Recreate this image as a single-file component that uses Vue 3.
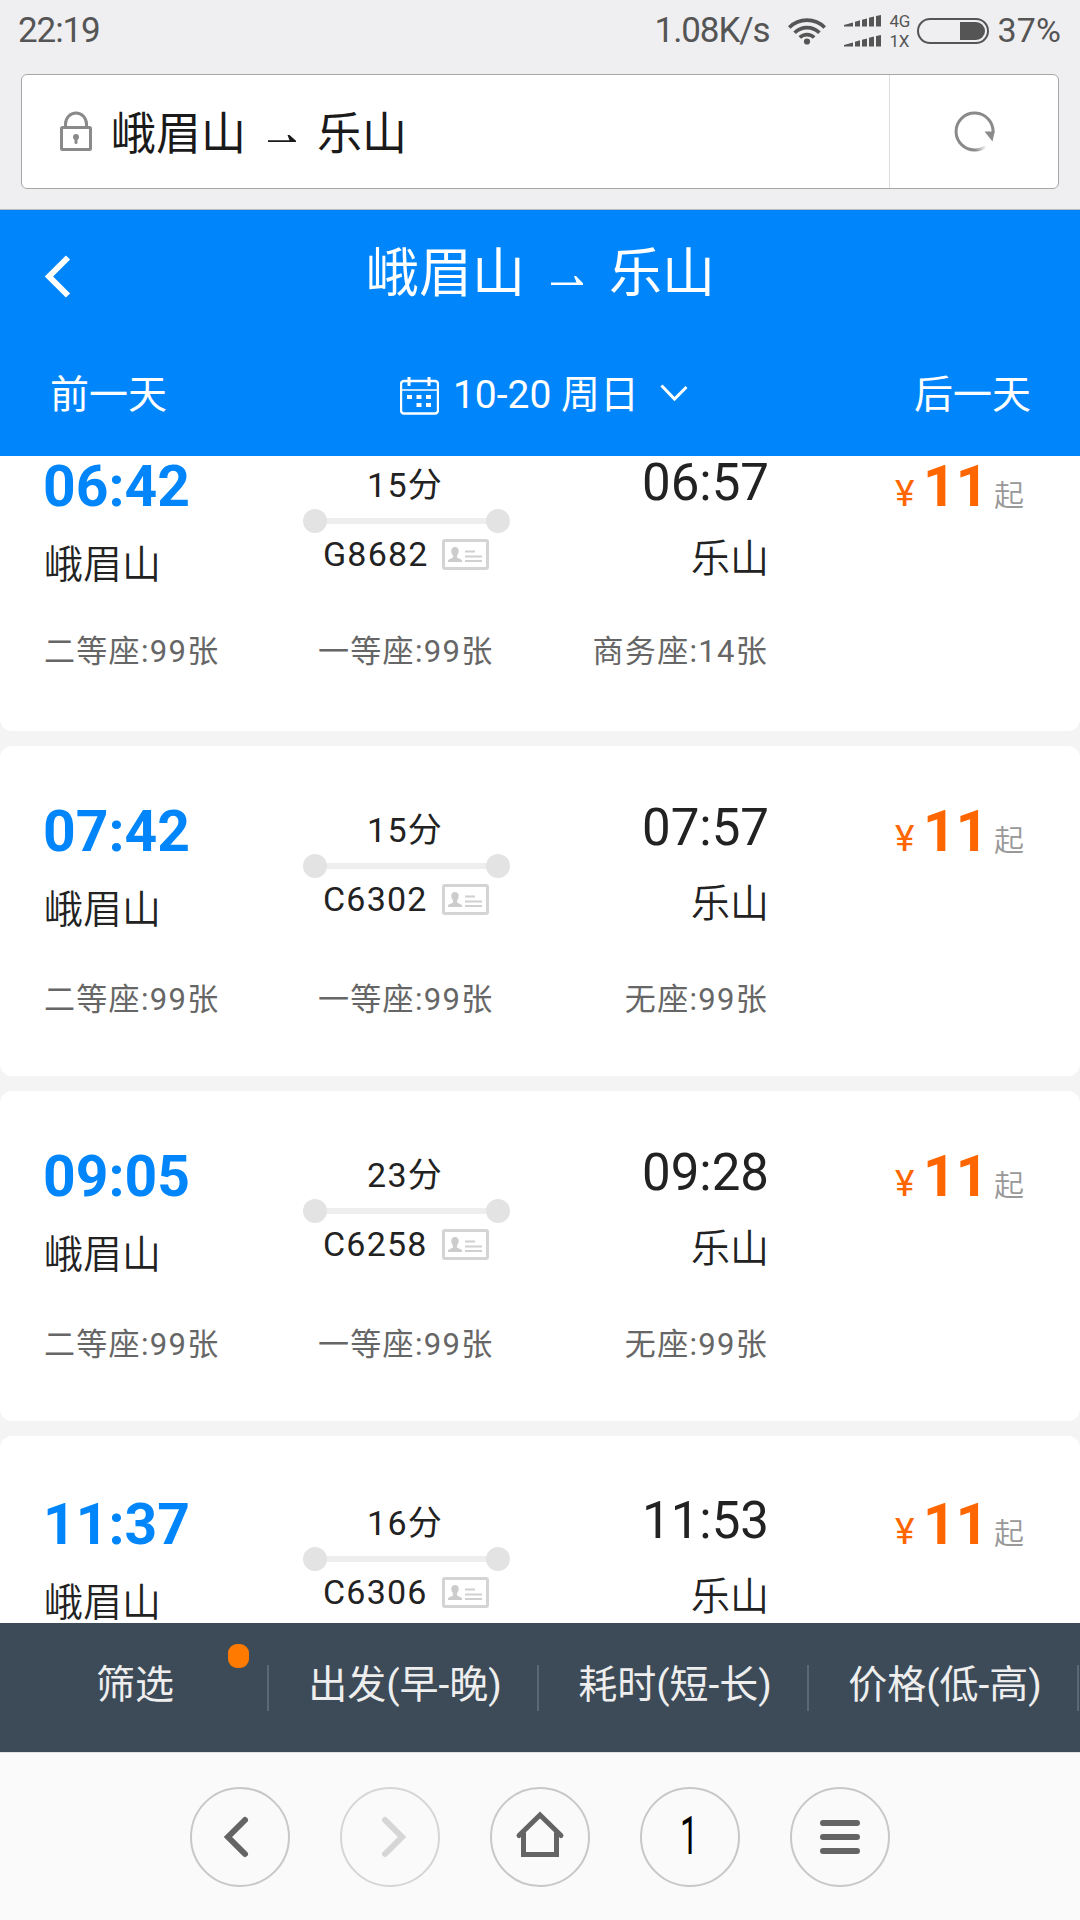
<script setup>
import { ref } from 'vue';

const from = ref('峨眉山');
const to = ref('乐山');

const trains = ref([
  { depart: '06:42', arrive: '06:57', duration: '15分', number: 'G8682', seats: ['二等座:99张', '一等座:99张', '商务座:14张'] },
  { depart: '07:42', arrive: '07:57', duration: '15分', number: 'C6302', seats: ['二等座:99张', '一等座:99张', '无座:99张'] },
  { depart: '09:05', arrive: '09:28', duration: '23分', number: 'C6258', seats: ['二等座:99张', '一等座:99张', '无座:99张'] },
  { depart: '11:37', arrive: '11:53', duration: '16分', number: 'C6306', seats: [] }
]);

const filters = ref([
  { title: '筛选', badge: true },
  { title: '出发(早-晚)' },
  { title: '耗时(短-长)' },
  { title: '价格(低-高)' }
]);
</script>

<template>
  <div class="page">
    <header class="browser">
      <div class="status">
        <span class="status__time">22:19</span>
        <span class="status__speed">1.08K/s</span>
        <svg class="status__wifi" width="38" height="28" viewBox="0 0 38 28">
          <g fill="none" stroke="#555" stroke-width="3.6">
            <path d="M1.3 10.5a25 25 0 0 1 35.4 0" />
            <path d="M6.6 15.8a17.5 17.5 0 0 1 24.8 0" />
            <path d="M11.8 20.6a10.2 10.2 0 0 1 14.4 0" />
          </g>
          <circle cx="19" cy="24.5" r="3.1" fill="#555" />
        </svg>
        <span class="status__signal">
          <svg v-for="n in 2" :key="n" width="37" height="12" viewBox="0 0 37 12" fill="#555">
            <path d="M0 11.5V10l9-2.6v4.1zM11 11.5V6.8l5-1.5v6.2zM18 11.5V4.7l5-1.3v8.1zM25 11.5V2.8l5-1.2v9.9zM32 11.5V1l5-1v11.5z" />
          </svg>
        </span>
        <span class="status__net"><i>4G</i><i>1X</i></span>
        <span class="status__battery"><b></b></span>
        <span class="status__percent">37%</span>
      </div>
      <div class="address">
        <svg class="address__lock" width="32" height="40" viewBox="0 0 32 40">
          <path d="M5.5 16v-3a10.5 11 0 0 1 21 0v3" fill="none" stroke="#8a8a8a" stroke-width="3" />
          <rect x="1.5" y="16.5" width="29" height="22" rx="1" fill="none" stroke="#8a8a8a" stroke-width="3" />
          <circle cx="16" cy="26" r="3" fill="#8a8a8a" />
          <path d="M16 26v5.5" stroke="#8a8a8a" stroke-width="3" stroke-linecap="round" />
        </svg>
        <div class="address__title">
          <span>{{ from }}</span>
          <svg class="address__arrow" width="28" height="8" viewBox="0 0 28 8">
            <path d="M0 5.2h21.5L19.5 0h2l6.5 5.8v1.2H0z" fill="#1a1a1a" />
          </svg>
          <span>{{ to }}</span>
        </div>
        <div class="address__reload">
          <svg width="41" height="41" viewBox="0 0 41 41">
            <defs>
              <linearGradient id="fade" gradientUnits="userSpaceOnUse" x1="21" y1="38" x2="32" y2="35">
                <stop offset="0" stop-color="#8a8a8a" />
                <stop offset="1" stop-color="#8a8a8a" stop-opacity="0" />
              </linearGradient>
            </defs>
            <path d="M39 22A18.5 18.5 0 1 0 21 39" fill="none" stroke="#8a8a8a" stroke-width="3" />
            <path d="M21 39A18.5 18.5 0 0 0 32 35.3" fill="none" stroke="url(#fade)" stroke-width="3" />
            <path d="M30.5 20.5h10.2l-2.2 10z" fill="#8a8a8a" />
          </svg>
        </div>
      </div>
    </header>

    <section class="head">
      <div class="head__top">
        <svg class="head__back" width="26" height="43" viewBox="0 0 26 43">
          <path d="M23 2.5L4 21.5l19 19" fill="none" stroke="#fff" stroke-width="6" />
        </svg>
        <h1 class="head__title">
          <span>{{ from }}</span>
          <svg class="head__arrow" width="32" height="10" viewBox="0 0 32 10">
            <path d="M0 6.5h25.5L23 0h2l7 7.2V9H0z" fill="#fff" />
          </svg>
          <span>{{ to }}</span>
        </h1>
      </div>
      <div class="head__days">
        <span>前一天</span>
        <div class="head__date">
          <svg class="head__calendar" width="39" height="38" viewBox="0 0 39 38">
            <rect x="1" y="4" width="37" height="32.5" rx="3" fill="none" stroke="#fff" stroke-width="2.4" />
            <path d="M1 13h37" stroke="#fff" stroke-width="1.6" />
            <path d="M9 0v9M29 0v9" stroke="#fff" stroke-width="3" />
            <path d="M7 18h5v4H7zM16.5 18h5v4h-5zM26 18h5v4h-5zM16.5 26h5v4h-5zM26 26h5v4h-5z" fill="#fff" />
          </svg>
          <span>10-20 周日</span>
          <svg class="head__chevron" width="28" height="18" viewBox="0 0 28 18">
            <path d="M1.5 1.5L14.5 15 26.5 3" fill="none" stroke="#fff" stroke-width="3" />
          </svg>
        </div>
        <span>后一天</span>
      </div>
    </section>

    <main class="list">
      <article v-for="train in trains" :key="train.number" class="train">
        <div class="train__info">
          <div class="train__from">
            <div class="train__depart">{{ train.depart }}</div>
            <div class="train__station">{{ from }}</div>
          </div>
          <div class="train__way">
            <div class="train__duration">{{ train.duration }}</div>
            <div class="train__track"></div>
            <div class="train__number">
              <span>{{ train.number }}</span>
              <svg width="47" height="31" viewBox="0 0 47 31">
                <rect x="1.5" y="1.5" width="44" height="28" rx="1.5" fill="none" stroke="#d4d4d4" stroke-width="3" />
                <path d="M6 23v-2l5-2.5v-2c-3-4-2-8.5 2-8.5s5 4.5 2 8.5v2l5 2.5v2z" fill="#ccc" />
                <path d="M23 12.5h10M23 17.5h17M23 22h17" stroke="#d0d0d0" stroke-width="2" />
              </svg>
            </div>
          </div>
          <div class="train__to">
            <div class="train__arrive">{{ train.arrive }}</div>
            <div class="train__station">{{ to }}</div>
          </div>
          <div class="train__price">
            <span class="train__currency">¥</span>
            <span class="train__amount">11</span>
            <span class="train__suffix">起</span>
          </div>
        </div>
        <div class="train__seats">
          <span v-for="seat in train.seats" :key="seat" class="train__seat">{{ seat }}</span>
        </div>
      </article>
    </main>

    <nav class="filters">
      <div v-for="filter in filters" :key="filter.title" class="filters__item">
        {{ filter.title }}
        <i v-if="filter.badge" class="filters__badge"></i>
      </div>
    </nav>

    <footer class="toolbar">
      <button class="toolbar__button">
        <svg width="100" height="100" viewBox="0 0 100 100">
          <path d="M55 33L38 50l17 17" />
        </svg>
      </button>
      <button class="toolbar__button toolbar__button_disabled">
        <svg width="100" height="100" viewBox="0 0 100 100">
          <path d="M45 33l17 17-17 17" />
        </svg>
      </button>
      <button class="toolbar__button">
        <svg width="100" height="100" viewBox="0 0 100 100">
          <path class="toolbar__home" d="M29 48.5L50 28l21 20.5M33.5 46v21.5h33V46" />
        </svg>
      </button>
      <button class="toolbar__button"><span class="toolbar__tabs">1</span></button>
      <button class="toolbar__button">
        <svg width="100" height="100" viewBox="0 0 100 100">
          <path class="toolbar__menu" d="M33 36h34M33 50h34M33 64h34" />
        </svg>
      </button>
    </footer>
  </div>
</template>

<style>
body {
  margin: 0;
  background-color: #f4f4f4;
}
</style>

<style scoped>
.page {
  display: flex;
  flex-direction: column;
  width: 1080px;
  height: 1920px;
  overflow: hidden;
  font-family: Roboto, 'Noto Sans CJK SC', sans-serif;
  color: #222;
}

svg {
  display: block;
  flex-shrink: 0;
}

i {
  font-style: normal;
}

.browser {
  box-sizing: border-box;
  flex-shrink: 0;
  height: 210px;
  border-bottom: 1px solid #bbb;
  background-color: #efeff1;
}

.status {
  display: flex;
  align-items: center;
  box-sizing: border-box;
  height: 74px;
  padding: 0 19px 13px 18px;
  color: #555;
  font-size: 35px;
  letter-spacing: -1.1px;
}

.status__time {
  flex-grow: 1;
}

.status__wifi {
  margin-left: 18px;
}

.status__signal {
  display: flex;
  flex-direction: column;
  gap: 8px;
  margin-left: 18px;
}

.status__net {
  display: flex;
  flex-direction: column;
  width: 22px;
  margin-left: 9px;
  font-size: 17px;
  line-height: 20px;
  letter-spacing: -0.5px;
}

.status__battery {
  display: flex;
  justify-content: flex-end;
  box-sizing: border-box;
  width: 72px;
  height: 26px;
  margin: 0 9px 0 5px;
  padding: 2px;
  border: 2px solid #555;
  border-radius: 13px;
}

.status__battery b {
  width: 25px;
  border-radius: 0 9px 9px 0;
  background-color: #555;
}

.status__percent {
  margin-bottom: 1px;
  font-size: 34px;
  letter-spacing: 0.1px;
}

.address {
  display: flex;
  align-items: center;
  box-sizing: border-box;
  height: 115px;
  margin: 0 21px;
  border: 1px solid #a6a8a8;
  border-radius: 6px;
  background-color: #fff;
}

.address__lock {
  margin: 0 0 2px 38px;
}

.address__title {
  display: flex;
  align-items: center;
  flex-grow: 1;
  margin: 0 0 3px 19px;
  color: #1a1a1a;
  font-size: 45px;
}

.address__arrow {
  margin: 17px 21px 0 22px;
}

.address__reload {
  display: flex;
  align-items: center;
  justify-content: center;
  width: 168px;
  height: 100%;
  border-left: 1px solid #ddd;
}

.head {
  box-sizing: border-box;
  flex-shrink: 0;
  height: 246px;
  background-color: #0086fa;
  color: #fff;
}

.head__top {
  display: flex;
  align-items: center;
  height: 126px;
  padding-left: 45px;
}

.head__back {
  margin-top: 6px;
}

.head__title {
  display: flex;
  align-items: center;
  margin: 0 0 9px 295px;
  font-size: 53px;
  font-weight: 400;
}

.head__arrow {
  margin: 24px 26px 0 26px;
}

.head__days {
  display: flex;
  align-items: center;
  justify-content: space-between;
  height: 110px;
  padding: 0 49px 0 50px;
  font-size: 39px;
}

.head__date {
  display: flex;
  align-items: center;
  margin-left: 7px;
}

.head__calendar {
  margin: 10px 14px 0 0;
}

.head__chevron {
  margin: 3px 0 0 21px;
}

/* the list is scrolled down, its first card is cut by the header */
.list {
  display: flex;
  flex-direction: column;
  flex-grow: 1;
  gap: 15px;
  height: 0;
  overflow: hidden;
  background-color: #f4f4f4;
}

.train {
  box-sizing: border-box;
  flex-shrink: 0;
  height: 330px;
  padding: 50px 0 0 44px;
  border-radius: 12px;
  background-color: #fff;
}

.train:first-child {
  margin-top: -55px;
}

.train:last-child {
  padding-top: 53px;
}

.train__info {
  display: grid;
  grid-template-columns: 259px 207px 258px 1fr;
  height: 145px;
}

.train__from {
  margin-left: -1px;
}

.train__depart {
  color: #0086fa;
  font-size: 57px;
  font-weight: 700;
  line-height: 71px;
}

.train__station {
  margin-top: 13px;
  font-size: 39px;
  font-weight: 350;
  line-height: 60px;
}

.train__from .train__station {
  padding-left: 1px;
}

.train__way {
  padding-top: 12px;
  font-size: 34px;
  letter-spacing: 1.2px;
  text-align: center;
}

.train__duration {
  padding-right: 3px;
  line-height: 44px;
}

.train__track {
  display: flex;
  align-items: center;
  justify-content: space-between;
  height: 24px;
  margin-top: 2px;
  background: linear-gradient(#eee, #eee) center / 190px 6px no-repeat;
}

.train__track::before,
.train__track::after {
  content: '';
  width: 24px;
  height: 24px;
  border-radius: 50%;
  background-color: #e3e3e3;
}

.train__number {
  display: flex;
  align-items: center;
  justify-content: space-between;
  padding: 0 21px 0 20px;
  line-height: 42px;
}

.train__to {
  margin-right: -1px;
  text-align: right;
}

.train__arrive {
  font-size: 51px;
  line-height: 64px;
}

.train__to .train__station {
  margin-top: 14px;
}

.train__price {
  display: flex;
  align-items: baseline;
  padding-left: 127px;
  line-height: 71px;
}

.train__currency {
  width: 28px;
  color: #f60;
  font-size: 37px;
}

.train__amount {
  width: 71px;
  color: #f60;
  font-size: 57px;
  font-weight: 700;
}

.train__suffix {
  color: #999;
  font-size: 30px;
  font-weight: 350;
}

.train__seats {
  display: grid;
  grid-template-columns: 274px 178px 272px;
  margin-top: 39px;
  color: #666;
  font-size: 31px;
  line-height: 40px;
  letter-spacing: 1.3px;
}

.train__seat:last-child {
  text-align: right;
}

.train:first-child .train__seats {
  margin-top: 36px;
}

.filters {
  display: flex;
  flex-shrink: 0;
  align-items: center;
  height: 129px;
  background-color: #3c4b57;
  color: #eee;
}

.filters__item {
  position: relative;
  left: -1px;
  box-sizing: border-box;
  width: 270px;
  height: 46px;
  padding-left: 4px;
  border-right: 2px solid #5b6873;
  font-size: 39px;
  line-height: 40px;
  text-align: center;
}

.filters__badge {
  position: absolute;
  top: -21px;
  right: 18px;
  width: 21px;
  height: 24px;
  border-radius: 9px;
  background-color: #ff7a00;
}

.toolbar {
  display: flex;
  flex-shrink: 0;
  justify-content: center;
  gap: 50px;
  box-sizing: border-box;
  height: 168px;
  padding-top: 34px;
  border-top: 1px solid #e2e2e2;
  background-color: #fafafa;
}

.toolbar__button {
  display: flex;
  align-items: center;
  justify-content: center;
  box-sizing: border-box;
  width: 100px;
  height: 100px;
  padding: 0;
  border: 2px solid #c8c8c8;
  border-radius: 50%;
  background: none;
}

.toolbar__button path {
  fill: none;
  stroke: #646464;
  stroke-width: 6;
  stroke-linecap: round;
}

.toolbar__button .toolbar__home {
  stroke-width: 5;
}

.toolbar__button_disabled {
  border-color: #d6d6d6;
}

.toolbar__button_disabled path {
  stroke: #d6d6d6;
}

.toolbar__tabs {
  margin: 0 2px 3px 0;
  color: #000;
  font-family: Roboto, sans-serif;
  font-size: 54px;
  font-weight: 400;
  transform: scaleX(0.6);
}
</style>
